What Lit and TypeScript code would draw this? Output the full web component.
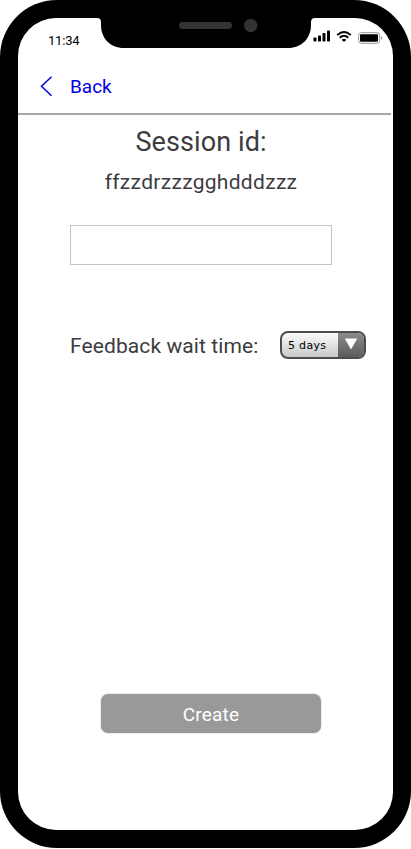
import { LitElement, html, css } from "lit";
import { customElement, property } from "lit/decorators.js";

@customElement("status-bar")
class StatusBar extends LitElement {
  @property() time = "";

  static styles = css`
    :host { display: flex; height: 37px; box-sizing: border-box; position: relative; }
    .time { margin: 15px 0 0 30px; font: 13px/16px Roboto, sans-serif; letter-spacing: -.2px; color: #000; white-space: nowrap; }
    .notch { position: absolute; left: 78px; top: -1px; }
    .icons { margin: 12px 10px 0 auto; display: block; flex: none; }
  `;

  render() {
    return html`
      <span class="time">${this.time}</span>
      <svg class="notch" width="220" height="32" viewBox="96 17 220 32">
        <path d="M96 17H316V18H315Q311 18 311 22V25C311 38 302 48 288 48H124C110 48 101 38 101 25V22Q101 18 97 18H96Z" fill="#000" />
        <rect x="179" y="22" width="53" height="7" rx="3.5" fill="#333" />
        <circle cx="250.700" cy="25.500" r="6.700" fill="#333" />
      </svg>
      <svg class="icons" width="70" height="15" viewBox="313 30 70 15">
        <rect x="313.500" y="37.500" width="3" height="4" rx=".8" />
        <rect x="318" y="35.500" width="3" height="6" rx=".8" />
        <rect x="322.500" y="33" width="3" height="8.500" rx=".8" />
        <rect x="327" y="30.500" width="3" height="11" rx=".8" />
        <g fill="none" stroke="#000" stroke-width="1.900">
          <path d="M337.300 35.100Q344 28.900 350.700 35.100" />
          <path d="M339.700 37.700Q344 33.900 348.300 37.700" />
        </g>
        <path d="M341.700 39.700Q344 37.900 346.300 39.700L344 42Z" />
        <rect x="358.600" y="32.700" width="21" height="10.600" rx="2.600" fill="none" stroke="#999" />
        <rect x="360" y="34.200" width="18" height="7.600" rx="1" />
        <path d="M381 36.200q1.400 .5 1.400 1.800t-1.400 1.800z" fill="#999" />
      </svg>
    `;
  }
}

@customElement("select-box")
class SelectBox extends LitElement {
  @property() value = "";

  static styles = css`
    :host {
      display: flex; width: 86px; height: 28px; box-sizing: border-box;
      border: 2px solid #4d4d4d; border-radius: 8px; overflow: hidden;
      background: linear-gradient(#fafafa, #c9c9c9);
    }
    .value {
      flex: 1; padding-left: 6px; white-space: nowrap; color: #000;
      font: 11px/25px "DejaVu Sans", sans-serif; letter-spacing: .3px;
    }
    .arrow {
      width: 26px; display: flex; align-items: center; justify-content: center;
      background: linear-gradient(#8b8b8b, #5c5c5c);
    }
    .arrow svg { margin-top: -2px; }
  `;

  render() {
    return html`
      <span class="value">${this.value}</span>
      <span class="arrow">
        <svg width="14" height="12" viewBox="0 0 14 12"><path d="M.8 .5H13.200L7 11.500Z" fill="#fff" /></svg>
      </span>
    `;
  }
}

@customElement("app-root")
class AppRoot extends LitElement {
  static styles = css`
    :host { display: block; height: 849px; background: #fff; font-family: Roboto, sans-serif; color: #3c3c3f; }
    .phone {
      box-sizing: border-box; width: 411px; height: 848px; padding: 18px;
      background: #000; border-radius: 57px;
    }
    .screen {
      width: 375px; height: 812px; background: #fff; border-radius: 38px;
      display: flex; flex-direction: column;
    }
    .nav {
      height: 60px; box-sizing: border-box; width: 373px; border-bottom: 2px solid #a6a6a6;
      display: flex; align-items: flex-start; padding-left: 22px; color: #0000e6;
    }
    .nav svg { margin-top: 21px; }
    .nav span { margin: 20px 0 0 17px; font-size: 19px; line-height: 24px; }
    .content { display: flex; flex-direction: column; }
    h1 { margin: 9px 9px 0 0; font-weight: 400; font-size: 27px; letter-spacing: .1px; line-height: 36px; text-align: center; }
    .id { margin: 9px 9px 0 0; font-size: 21px; letter-spacing: .3px; line-height: 26px; text-align: center; }
    .field {
      box-sizing: border-box; width: 262px; height: 40px; margin: 30px 0 0 52px; padding: 0 10px;
      border: 1px solid #c4c4c4; border-radius: 0; background: #fff; outline: 0;
    }
    .row { display: flex; margin: 66px 0 0 52px; height: 28px; }
    .row span { width: 210px; font-size: 21px; letter-spacing: .1px; line-height: 30px; white-space: nowrap; }
    .create {
      width: 220px; height: 39px; margin: 335px 0 0 83px; padding: 2px 0 0;
      box-sizing: border-box; border: 0; border-radius: 7px; box-shadow: 0 0 0 1px #ececec;
      background: #999; color: #fff; font: 19px/37px Roboto, sans-serif; letter-spacing: .2px; text-align: center;
    }
  `;

  render() {
    return html`
      <div class="phone">
        <div class="screen">
          <status-bar time="11:34"></status-bar>
          <div class="nav">
            <svg width="13" height="21" viewBox="0 0 13 21">
              <path d="M11.500 .7L1.500 10.300L11.500 19.800" fill="none" stroke="#0000e6" stroke-width="1.500" />
            </svg>
            <span>Back</span>
          </div>
          <div class="content">
            <h1>Session id:</h1>
            <div class="id">ffzzdrzzzgghdddzzz</div>
            <input class="field" type="text" />
            <div class="row">
              <span>Feedback wait time:</span>
              <select-box value="5 days"></select-box>
            </div>
            <button class="create">Create</button>
          </div>
        </div>
      </div>
    `;
  }
}
